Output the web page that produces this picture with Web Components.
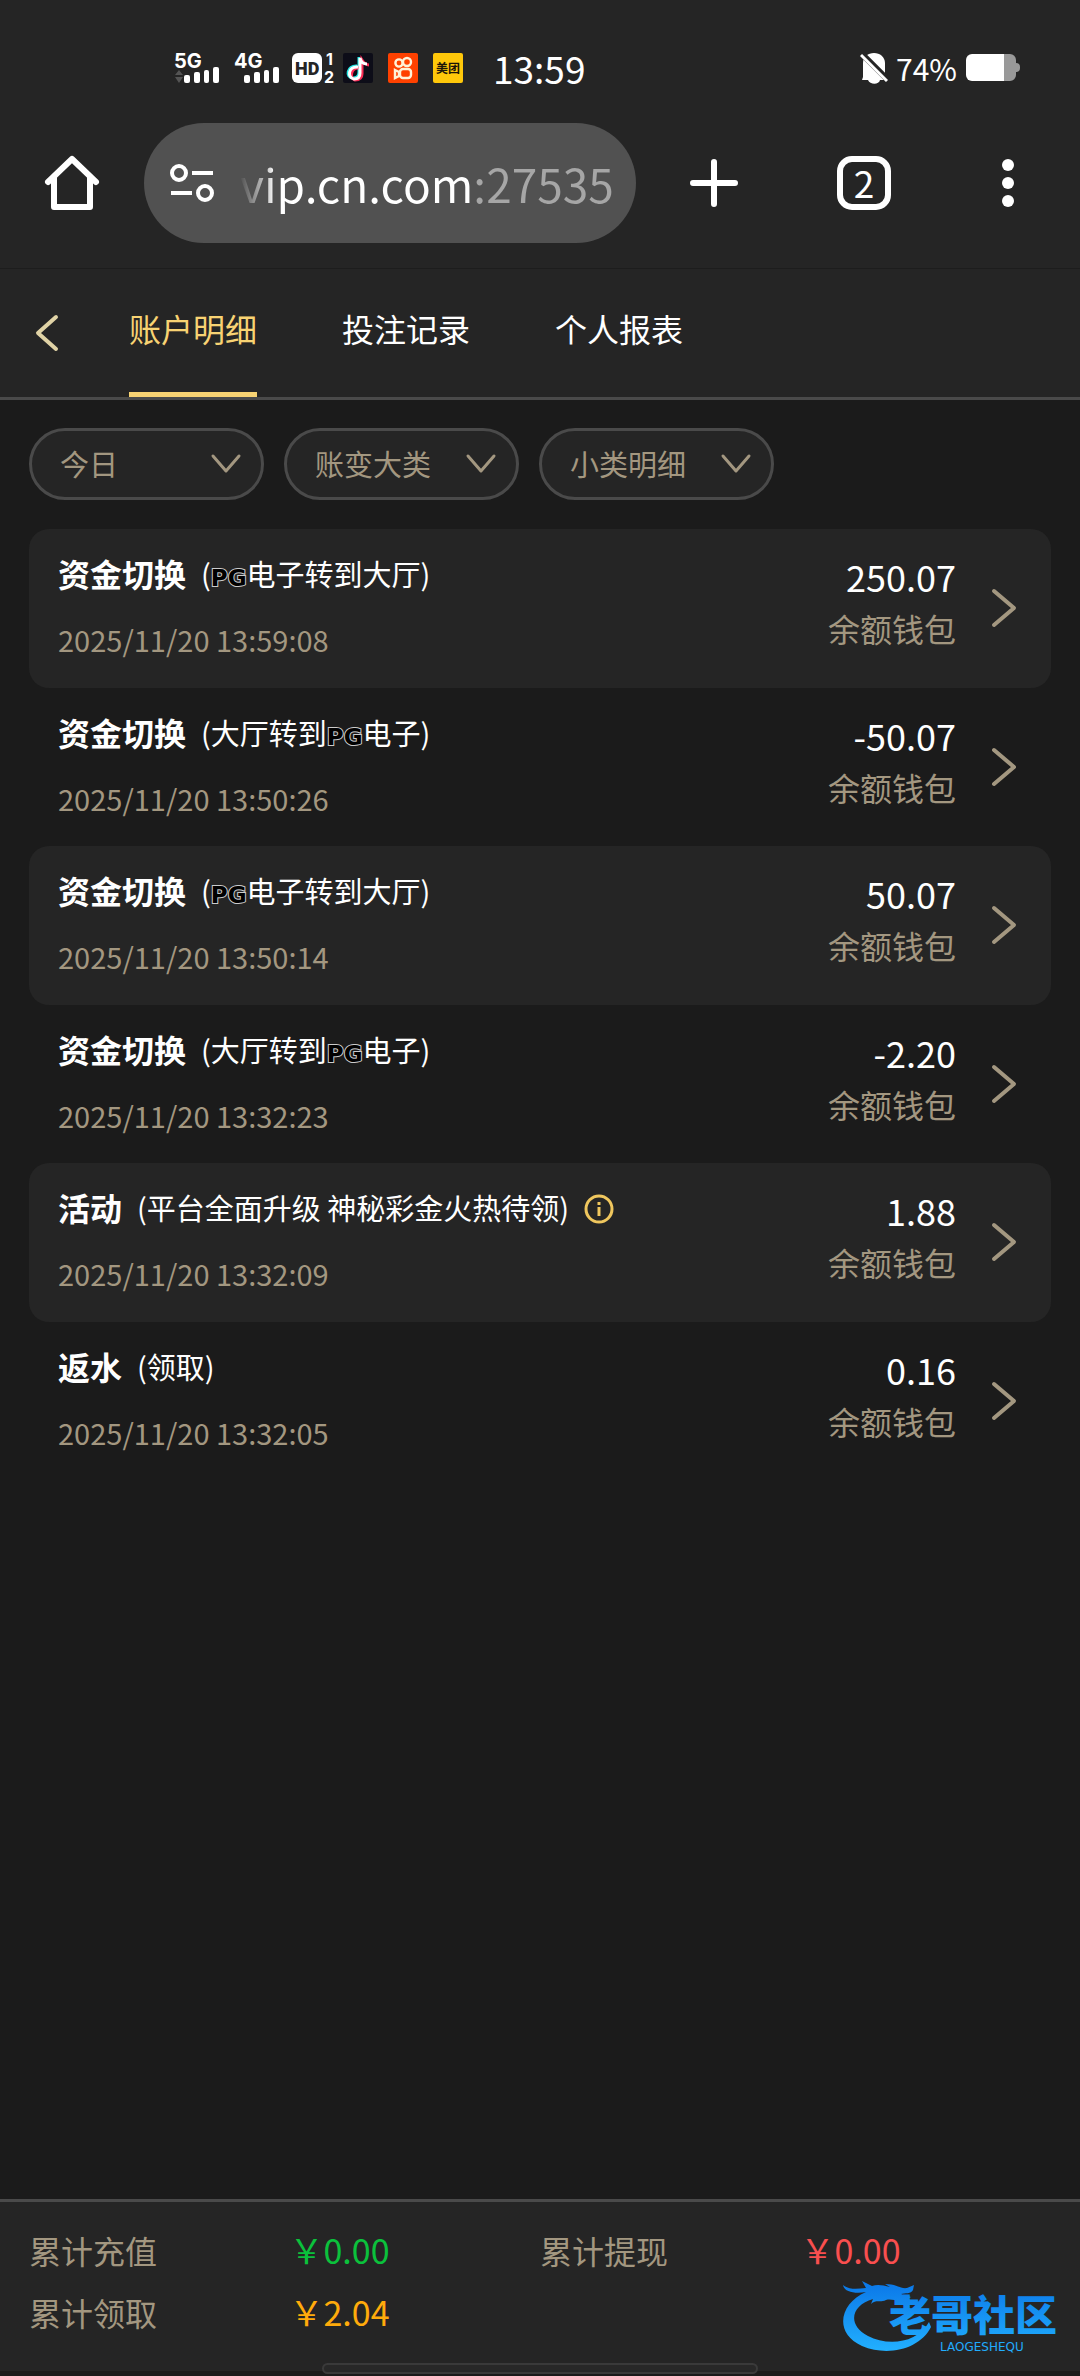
<!DOCTYPE html>
<html lang="zh-CN">
<head>
<meta charset="utf-8">
<meta name="viewport" content="width=device-width, initial-scale=1">
<title>账户明细</title>
<style>
:root{--bar:#252525;--page:#1b1b1b;--line:#4a4a4a;--sand:#a39780;--gold:#f8d373}
html,body{margin:0;background:var(--page)}
body{font-family:"Noto Sans CJK SC",sans-serif;color:#fff}
</style>
</head>
<body>
<account-page>
  <status-bar slot="top" time="13:59" battery="74%"></status-bar>
  <browser-bar slot="top" address="vip.cn.com:27535" tabs="2"></browser-bar>
  <tab-header slot="top">
    <a href="#account" aria-current="page">账户明细</a>
    <a href="#bets">投注记录</a>
    <a href="#report">个人报表</a>
  </tab-header>
  <filter-select label="今日" name="日期"></filter-select>
  <filter-select label="账变大类" name="大类"></filter-select>
  <filter-select label="小类明细" name="小类"></filter-select>
  <record-row slot="rows" name="资金切换" time="2025/11/20 13:59:08" amount="250.07" striped>(<pg-mark>PG</pg-mark>电子转到大厅)</record-row>
  <record-row slot="rows" name="资金切换" time="2025/11/20 13:50:26" amount="-50.07">(大厅转到<pg-mark>PG</pg-mark>电子)</record-row>
  <record-row slot="rows" name="资金切换" time="2025/11/20 13:50:14" amount="50.07" striped>(<pg-mark>PG</pg-mark>电子转到大厅)</record-row>
  <record-row slot="rows" name="资金切换" time="2025/11/20 13:32:23" amount="-2.20">(大厅转到<pg-mark>PG</pg-mark>电子)</record-row>
  <record-row slot="rows" name="活动" time="2025/11/20 13:32:09" amount="1.88" striped info>(平台全面升级 神秘彩金火热待领)</record-row>
  <record-row slot="rows" name="返水" time="2025/11/20 13:32:05" amount="0.16">(领取)</record-row>
  <totals-bar slot="bottom">
    <total-item label="累计充值" style="--tone:#0bc13c">&#xFFE5;0.00</total-item>
    <total-item label="累计提现" style="--tone:#f94f4f">&#xFFE5;0.00</total-item>
    <total-item label="累计领取" style="--tone:#ffab0b">&#xFFE5;2.04</total-item>
  </totals-bar>
</account-page>
<script>
function define(name, render) {
  customElements.define(name, class extends HTMLElement {
    constructor() { super(); this.attachShadow({ mode: "open" }); }
    connectedCallback() {
      const t = document.createElement("template");
      t.innerHTML = render(this).trim();
      this.shadowRoot.replaceChildren(t.content.cloneNode(true));
    }
  });
}
const attr = (el, n) => el.getAttribute(n) || "";

define("account-page", () => `
<style>
:host{display:flex;flex-direction:column;min-height:100vh;position:relative;box-sizing:border-box;padding-bottom:5px;overflow:hidden}
.filters{display:flex;gap:20px;padding:28px 29px 29px}
.rows{flex:1;padding:0 29px}
brand-mark{position:absolute;right:15px;bottom:22px}
.handle{position:absolute;left:50%;bottom:2px;width:436px;height:11px;margin-left:-218px;box-sizing:border-box;border:2px solid #3a3a3a;border-radius:6px;background:#282828}
</style>
<header><slot name="top"></slot></header>
<div class="filters"><slot></slot></div>
<main class="rows"><slot name="rows"></slot></main>
<slot name="bottom"></slot>
<brand-mark></brand-mark>
<div class="handle"></div>`);

define("status-bar", el => `
<style>
:host{display:flex;align-items:center;justify-content:space-between;height:123px;box-sizing:border-box;padding:12px 59px 0 173px;background:var(--bar)}
.group{display:flex;align-items:center;height:60px}
.right{gap:8px}
svg{display:block}
time{font-size:37px;line-height:40px;margin-left:28px}
.pct{font-size:30px;line-height:40px}
</style>
<div class="group left">
<svg width="292" height="52" viewBox="173 41 292 52" fill="#fff" font-family="Inter,sans-serif" font-weight="700">
  <g font-size="20"><text x="174" y="67">5G</text><text x="234" y="67">4G</text></g>
  <path fill="#555" d="M175 74l4-5 4 5zM175 76h8l-4 6z"/>
  <g id="b"><rect x="184" y="74" width="6" height="8" rx="2"/><rect x="194" y="71" width="6" height="11" rx="2"/><rect x="204" y="69" width="5" height="13" rx="2"/><rect x="213" y="66" width="6" height="16" rx="2"/></g>
  <use href="#b" x="60"/>
  <rect x="292" y="52" width="30" height="30" rx="6"/>
  <text x="295" y="74" font-size="18" font-weight="900" fill="#252525" font-family="Roboto">HD</text>
  <text x="326" y="64" font-size="16">1</text><text x="324" y="82" font-size="16">2</text>
  <rect x="343" y="52" width="30" height="30" rx="2" fill="#0d0d18"/>
  <g fill="none" stroke-width="3"><path stroke="#26e8e4" d="M357 65c-10-1-12 12-4 12 5 0 6-3 6-6V56"/><path stroke="#fb2c55" d="M359 67c-8-1-10 10-4 12 5 0 7-3 7-6V59c2 3 4 5 7 5"/><path stroke="#fff" d="M358 66c-10-1-11 11-4 12 4 0 6-2 6-6V57c1 4 4 6 7 6"/></g>
  <rect x="388" y="52" width="30" height="30" rx="2" fill="#ff4100"/>
  <g fill="none" stroke="#fff2d8" stroke-width="2.4"><circle cx="399" cy="62" r="3.6"/><circle cx="407" cy="61" r="4"/><rect x="400" y="68" width="11" height="9" rx="3"/><path d="M395 69l4 2v4l-4 2z"/></g>
  <rect x="433" y="52" width="30" height="30" rx="2" fill="#ffc80a"/>
  <text x="436" y="72" font-size="12" fill="#1b1508" font-family="Noto Sans CJK SC">美团</text>
</svg>
<time>${attr(el, "time")}</time>
</div>
<div class="group right">
<svg width="28" height="32" viewBox="856 51 28 32" fill="#fff"><path d="M859 76V62c0-6 5-10 11-10s11 4 11 10v14l3 3h-26zM864 79h12c-1 5-10 5-12 0z"/><path stroke="#252525" stroke-width="6" d="M855 50l31 31"/><path stroke="#fff" stroke-width="3" d="M857 54l26 26"/></svg>
<span class="pct">${attr(el, "battery")}</span>
<svg width="56" height="28" viewBox="965 55 56 28"><path fill="#999" d="M1003 55h7a6 6 0 0 1 6 6v3q4 0 4 4v1q0 4-4 4v3a6 6 0 0 1-6 6h-7z"/><path fill="#fff" d="M1004 55h-32a6 6 0 0 0-6 6v15a6 6 0 0 0 6 6h32z"/></svg>
</div>`);

define("browser-bar", el => `
<style>
:host{display:flex;align-items:center;height:146px;box-sizing:border-box;padding-bottom:26px;background:var(--bar);border-bottom:1px solid #1d1d1d}
button{flex:none;width:144px;height:120px;padding:0;border:0;background:none;color:#fff;font:inherit;display:grid;place-items:center}
.add{width:156px}
.omni{flex:1;min-width:0;display:flex;align-items:center;height:120px;border-radius:60px;background:#515151}
.omni svg{flex:none;margin:0 25px}
input{flex:1;min-width:0;height:80px;padding:0;margin-right:18px;border:0;outline:0;font:46px/80px "Noto Sans CJK SC",sans-serif;color:#fff;
 background:linear-gradient(90deg,#fff0 0,#fffc 30px,#fff 34px,#fff 235px,#a6a6a6 235px);-webkit-background-clip:text;background-clip:text;-webkit-text-fill-color:transparent}
.count{width:54px;height:54px;box-sizing:border-box;border:6px solid #fff;border-radius:15px;font-size:37px;line-height:40px}
</style>
<button aria-label="主页"><svg width="56" height="56" viewBox="44 155 56 56" fill="none" stroke="#fff" stroke-width="6" stroke-linecap="round" stroke-linejoin="round"><path d="M48 182l24-23 24 23M54 178v29h36v-29" /></svg></button>
<div class="omni">
<svg width="46" height="42" viewBox="169 162 46 42" fill="none" stroke="#fff" stroke-width="4"><circle cx="179" cy="173" r="7"/><circle cx="205" cy="193" r="7"/><path d="M192 173h21M171 193h21"/></svg>
<input aria-label="网址" value="${attr(el, "address")}">
</div>
<button class="add" aria-label="新标签页"><svg width="48" height="48" fill="none" stroke="#fff" stroke-width="6" stroke-linecap="round"><path d="M24 3v42M3 24h42"/></svg></button>
<button aria-label="标签页"><span class="count">${attr(el, "tabs")}</span></button>
<button aria-label="菜单"><svg width="12" height="48" fill="#fff"><circle cx="6" cy="6" r="6"/><circle cx="6" cy="24" r="6"/><circle cx="6" cy="42" r="6"/></svg></button>`);

define("tab-header", () => `
<style>
:host{display:flex;align-items:stretch;height:131px;box-sizing:border-box;background:var(--bar);border-bottom:3px solid var(--line)}
button{width:94px;margin-right:35px;padding:0;border:0;background:none;display:grid;place-items:center}
nav{display:flex;gap:85px}
::slotted(a){box-sizing:border-box;border-bottom:5px solid transparent;border-radius:3px 3px 0 0;font-size:32px;line-height:118px;color:#fff;text-decoration:none}
::slotted(a[aria-current]){color:var(--gold);background:linear-gradient(var(--gold),var(--gold)) bottom/100% 5px no-repeat border-box}
</style>
<button aria-label="返回"><svg width="26" height="38" fill="none" stroke="#e0d3a6" stroke-width="4" stroke-linecap="round" stroke-linejoin="round"><path d="M22 3L4 19l18 16"/></svg></button>
<nav><slot></slot></nav>`);

define("filter-select", el => `
<style>
:host{display:grid;width:235px;height:72px}
select,svg{grid-area:1/1}
select{appearance:none;width:100%;height:100%;box-sizing:border-box;padding:0 60px 2px 28px;border:3px solid var(--line);border-radius:36px;background:var(--bar);color:var(--sand);font:29px/40px "Noto Sans CJK SC",sans-serif}
svg{justify-self:end;align-self:center;margin-right:22px;pointer-events:none}
</style>
<select aria-label="${attr(el, "name")}"><option>${attr(el, "label")}</option></select>
<svg width="32" height="22" fill="none" stroke="var(--sand)" stroke-width="3" stroke-linecap="round" stroke-linejoin="round"><path d="M3 3l13 15L29 3"/></svg>`);

define("pg-mark", () => `<style>:host{font:700 23px/28px "DejaVu Sans",sans-serif;color:#000;-webkit-text-stroke:2px #ccc;paint-order:stroke fill}</style><slot></slot>`);

define("record-row", el => `
<style>
:host{display:block}
a{display:flex;align-items:flex-start;padding:22px 34px 28px 29px;border-radius:20px;color:#fff;text-decoration:none}
:host([striped]) a{background:var(--bar);padding-bottom:29px}
.main{flex:1;display:flex;flex-direction:column;gap:24px}
.title{display:flex;align-items:center;gap:15px;line-height:44px;font-size:29px}
.title svg{margin-top:4px}
b{font-size:32px}
time{font-size:29px;line-height:40px;color:var(--sand)}
.side{display:flex;flex-direction:column;gap:8px;text-align:right;padding-top:1px}
.amount{font-size:36px;line-height:48px}
.wallet{font-size:32px;line-height:40px;color:var(--sand)}
.go{align-self:center;margin:6px 0 0 35px}
</style>
<a href="#detail">
<div class="main">
<div class="title"><b>${attr(el, "name")}</b><span><slot></slot></span>${el.hasAttribute("info") ? `<svg width="30" height="30" fill="none" stroke="#f0c75e" stroke-width="3"><circle cx="15" cy="15" r="13"/><path d="M15 13v9M15 8v3"/></svg>` : ""}</div>
<time>${attr(el, "time")}</time>
</div>
<div class="side"><span class="amount">${attr(el, "amount")}</span><span class="wallet">余额钱包</span></div>
<svg class="go" width="26" height="40" fill="none" stroke="var(--sand)" stroke-width="4" stroke-linecap="round" stroke-linejoin="round"><path d="M3 3l20 17L3 37"/></svg>
</a>`);

define("totals-bar", () => `
<style>
:host{display:grid;grid-template-columns:1fr 1fr;row-gap:14px;padding:24px 29px 35px;background:var(--bar);border-top:3px solid var(--line)}
</style><slot></slot>`);

define("total-item", el => `
<style>
:host{display:grid;grid-template-columns:1fr 1fr;align-items:center;line-height:48px;font-size:32px}
.label{color:var(--sand)}
.value{color:var(--tone);font-size:34px;padding-left:5px}
</style><span class="label">${attr(el, "label")}</span><span class="value"><slot></slot></span>`);

define("brand-mark", () => `
<style>
:host{display:block;width:224px;height:74px}
svg{display:block}
</style>
<svg width="224" height="74" viewBox="841 2279 224 74" role="img" aria-label="老哥社区">
<defs><linearGradient id="g" x1="0" y1="2282" x2="0" y2="2350" gradientUnits="userSpaceOnUse"><stop offset="0" stop-color="#0b78e8"/><stop offset="1" stop-color="#22b0ff"/></linearGradient></defs>
<g fill="url(#g)">
<path d="M866 2291C840 2302 833 2332 862 2345C888 2356 920 2348 931 2326L929 2321C917 2343 887 2345 868 2335C846 2323 852 2304 873 2298L871 2303C876 2298 880 2302 886 2299C892 2297 899 2302 907 2298L911 2296L901 2293C905 2292 911 2293 913 2289L914 2284L907 2287C900 2288 897 2283 885 2283L890 2286C883 2284 877 2283 872 2285L862 2280L866 2287C857 2288 849 2289 843 2284C844 2291 855 2293 866 2291Z"/>
<text x="889" y="2330" font-family="Noto Sans CJK SC" font-weight="900" font-size="42">老哥社区</text>
<text x="940" y="2350" font-family="DejaVu Sans" font-size="12">LAOGESHEQU</text>
</g></svg>`);
</script>
</body>
</html>
